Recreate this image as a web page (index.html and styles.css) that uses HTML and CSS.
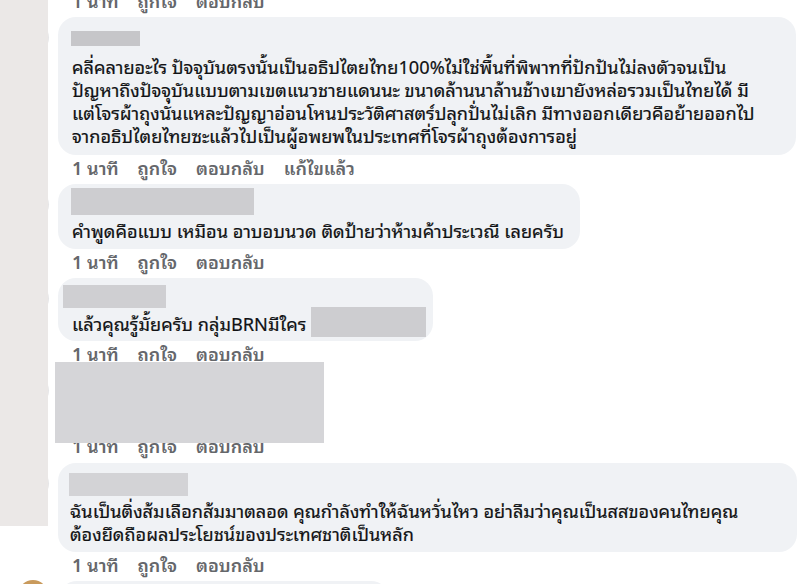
FILE: index.html
```html
<!DOCTYPE html>
<html lang="th">
<head>
<meta charset="utf-8">
<title>Comments</title>
<link rel="stylesheet" href="styles.css">
</head>
<body>
<div class="page">
  <div class="strip"></div>
  <div class="thread">
    <div class="meta meta-top"><span>1 นาที</span><span>ถูกใจ</span><span>ตอบกลับ</span></div>

    <div class="comment">
      <div class="avatar"></div>
      <div class="body">
        <div class="bubble b1">
          <div class="name n1"></div>
          <div class="text">คลี่คลายอะไร ปัจจุบันตรงนั้นเป็นอธิปไตยไทย100%ไม่ใช่พื้นที่พิพาทที่ปักปันไม่ลงตัวจนเป็น<br>ปัญหาถึงปัจจุบันแบบตามเขตแนวชายแดนนะ ขนาดล้านนาล้านช้างเขายังหล่อรวมเป็นไทยได้ มี<br>แต่โจรผ้าถุงนั่นแหละปัญญาอ่อนโหนประวัติศาสตร์ปลุกปั่นไม่เลิก มีทางออกเดียวคือย้ายออกไป<br>จากอธิปไตยไทยซะแล้วไปเป็นผู้อพยพในประเทศที่โจรผ้าถุงต้องการอยู่</div>
        </div>
        <div class="meta"><span>1 นาที</span><span>ถูกใจ</span><span>ตอบกลับ</span><span>แก้ไขแล้ว</span></div>
      </div>
    </div>

    <div class="comment">
      <div class="avatar"></div>
      <div class="body">
        <div class="bubble b2">
          <div class="name n2"></div>
          <div class="text">คำพูดคือแบบ เหมือน อาบอบนวด ติดป้ายว่าห้ามค้าประเวณี เลยครับ</div>
        </div>
        <div class="meta"><span>1 นาที</span><span>ถูกใจ</span><span>ตอบกลับ</span></div>
      </div>
    </div>

    <div class="comment">
      <div class="avatar"></div>
      <div class="body">
        <div class="bubble b3">
          <div class="name n3"></div>
          <div class="text">แล้วคุณรู้มั้ยครับ กลุ่มBRNมีใคร<span class="inline-redact"></span></div>
        </div>
        <div class="meta"><span>1 นาที</span><span>ถูกใจ</span><span>ตอบกลับ</span></div>
      </div>
    </div>

    <div class="comment">
      <div class="avatar"></div>
      <div class="body body-redacted">
        <div class="bubble b4"></div>
        <div class="meta"><span>1 นาที</span><span>ถูกใจ</span><span>ตอบกลับ</span></div>
        <div class="big-redact"></div>
      </div>
    </div>

    <div class="comment">
      <div class="avatar"></div>
      <div class="body">
        <div class="bubble b5">
          <div class="name n5"></div>
          <div class="text">ฉันเป็นติ่งส้มเลือกส้มมาตลอด คุณกำลังทำให้ฉันหวั่นไหว อย่าลืมว่าคุณเป็นสสของคนไทยคุณ<br>ต้องยึดถือผลประโยชน์ของประเทศชาติเป็นหลัก</div>
        </div>
        <div class="meta"><span>1 นาที</span><span>ถูกใจ</span><span>ตอบกลับ</span></div>
      </div>
    </div>

    <div class="comment">
      <div class="avatar avatar-tan"></div>
      <div class="body">
        <div class="bubble b6"></div>
      </div>
    </div>
  </div>
</div>
</body>
</html>
```

FILE: styles.css
```css
html, body {
  margin: 0;
  padding: 0;
  background: #ffffff;
}

body {
  font-family: "Noto Sans Thai Looped", "Loma", "Garuda", "Noto Sans Thai", "Leelawadee UI", Tahoma, "Noto Sans", "DejaVu Sans", sans-serif;
  color: #050505;
}

.page {
  position: relative;
  width: 800px;
  height: 584px;
  overflow: hidden;
}

.strip {
  position: absolute;
  left: 0;
  top: 0;
  width: 48px;
  height: 526px;
  background: #ebe8e7;
  z-index: 2;
}

.thread {
  margin-top: -12px;
  display: flex;
  flex-direction: column;
}

.comment {
  display: flex;
  align-items: flex-start;
  padding-left: 16px;
  gap: 10px;
}

.avatar {
  flex: none;
  width: 33px;
  height: 33px;
  border-radius: 50%;
  background: #e6e6e8;
  margin-top: 4px;
}

.avatar-tan {
  background: #c99a5c;
  margin-top: -1px;
  margin-left: 2px;
  width: 30px;
  height: 30px;
}

.body {
  display: flex;
  flex-direction: column;
  align-items: flex-start;
  margin-left: -1px;
}

.avatar-tan + .body {
  margin-left: -3px;
}

.body-redacted {
  position: relative;
}

.bubble {
  background: #f0f2f5;
  border-radius: 18px;
  box-sizing: border-box;
  padding: 0 0 0 14px;
}

.b1 { width: 738px; padding-top: 14px; padding-bottom: 9px; }
.b2 { width: 522px; padding-top: 4px; padding-bottom: 8px; }
.b3 { width: 375px; padding-top: 7px; padding-bottom: 7px; }
.b4 { width: 262px; height: 63px; }
.b5 { width: 739px; padding-top: 10px; padding-bottom: 8px; padding-left: 12px; }
.b6 { width: 330px; height: 60px; margin-left: 4px; }

.name {
  background: #c8c8cb;
}

.n1 { width: 69px; height: 15px; margin: 0 0 8px -1px; background: #c6c6c9; }
.n2 { width: 183px; height: 27px; margin: 0 0 3px -1px; background: #cdcdd0; }
.n3 { width: 103px; height: 23px; margin: 0 0 3px -9px; background: #cfcfd2; }
.n5 { width: 119px; height: 23px; margin: 0 0 2px -1px; background: #d3d3d6; }

.text {
  font-size: 18.2px;
  font-weight: 400;
  line-height: 23px;
  color: #111214;
  -webkit-text-stroke: 0.2px #111214;
  white-space: nowrap;
}

.inline-redact {
  display: inline-block;
  width: 115px;
  height: 30px;
  background: #cdcdd0;
  vertical-align: top;
  margin: -4px 0 -4px 5px;
}

.big-redact {
  position: absolute;
  left: -3px;
  top: -8px;
  width: 269px;
  height: 81px;
  background: #d5d5d8;
}

.meta {
  display: flex;
  gap: 19px;
  margin: 3px 0 8px 14px;
  font-size: 18px;
  line-height: 18px;
  height: 18px;
  font-weight: 600;
  color: #65676b;
  white-space: nowrap;
}

.meta-top {
  margin-left: 72px;
}

.body-redacted .meta {
  margin-bottom: 9px;
}
```
